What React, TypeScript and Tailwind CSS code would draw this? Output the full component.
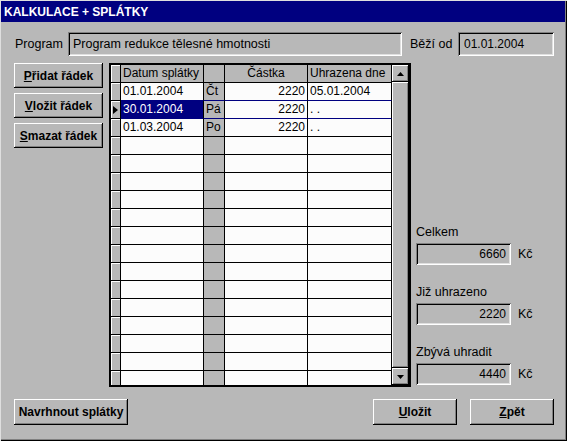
import React from 'react'

const raised = 'shadow-[inset_-1px_-1px_#000,inset_1px_1px_#fff,inset_-2px_-2px_#808080]'
const sunken = 'shadow-[inset_1px_1px_#808080,inset_-1px_-1px_#fff,inset_2px_2px_#000,inset_-2px_-2px_#dfdfdf]'

interface Row {
  date: string,
  day: string,
  amount: string,
  paid: string
}

const rows: Row[] = [
  { date: '01.01.2004', day: 'Čt', amount: '2220', paid: '05.01.2004' },
  { date: '30.01.2004', day: 'Pá', amount: '2220', paid: '. .' },
  { date: '01.03.2004', day: 'Po', amount: '2220', paid: '. .' },
  ...Array.from({ length: 14 }, () => ({ date: '', day: '', amount: '', paid: '' }))
]

const Btn: React.FC<{ children: React.ReactNode, className: string }> = ({ children, className }) => (
  <div className={`flex items-center justify-center bg-[#b8b8b8] font-bold text-[12px] text-black ${raised} ${className}`}>
    {children}
  </div>
)

const Field: React.FC<{ children: React.ReactNode, className: string }> = ({ children, className }) => (
  <div className={`flex items-center text-black ${sunken} ${className}`}>{children}</div>
)

const Arrow: React.FC<{ up?: boolean }> = ({ up }) => (
  <svg width="7" height="4" viewBox="0 0 7 4">
    {up ? <polygon points="3.5,0 7,4 0,4" fill="#000" /> : <polygon points="0,0 7,0 3.5,4" fill="#000" />}
  </svg>
)

const Grid: React.FC = () => {
  return (
    <div className="ml-[6px] w-[302px] h-[324px] border-2 border-black flex overflow-hidden text-[12px]">
      <div className="w-[281px] flex flex-col">
        {/* header */}
        <div className="flex h-[18px] shrink-0 border-b border-black bg-[#b8b8b8]">
          <div className="w-[10px] border-r border-black shadow-[inset_1px_1px_#fff]" />
          <div className="w-[83px] border-r border-black pl-[2px] leading-[17px] whitespace-nowrap overflow-hidden">Datum splátky</div>
          <div className="w-[21px] border-r border-black" />
          <div className="w-[83px] border-r border-black text-center leading-[17px]">Částka</div>
          <div className="w-[84px] border-r border-black pl-[2px] leading-[17px] whitespace-nowrap overflow-hidden">Uhrazena dne</div>
        </div>
        {rows.map((r, i) => {
          const line = i === 0 || i === 1 ? 'border-b-[#000080]' : 'border-b-black'
          const sel = i === 1
          return (
            <div key={i} className="flex h-[18px] shrink-0">
              <div className="w-[10px] border-r border-b border-black bg-[#b8b8b8] shadow-[inset_1px_1px_#fff] flex items-center pl-[2px]">
                {sel && (
                  <svg width="5" height="8" viewBox="0 0 5 8"><polygon points="0,0 5,4 0,8" fill="#000" /></svg>
                )}
              </div>
              <div className={`w-[83px] border-r border-r-black border-b ${line} pl-[2px] leading-[17px] ${sel ? 'bg-[#000080] text-white' : 'bg-[#fcfcfc]'}`}>{r.date}</div>
              <div className={`w-[21px] border-r border-r-black border-b ${line} bg-[#b8b8b8] pl-[2px] leading-[17px]`}>{r.day}</div>
              <div className={`w-[83px] border-r border-r-black border-b ${line} bg-[#fcfcfc] pr-[2px] text-right leading-[17px]`}>{r.amount}</div>
              <div className={`w-[84px] border-r border-r-black border-b ${line} bg-[#fcfcfc] pl-[2px] leading-[17px] whitespace-pre`}>{r.paid}</div>
            </div>
          )
        })}
      </div>
      {/* scrollbar */}
      <div className="w-[17px] flex flex-col bg-[#b8b8b8]">
        <div className={`h-[17px] shrink-0 flex items-center justify-center ${raised}`}><Arrow up /></div>
        <div className={`flex-1 ${raised}`} />
        <div className={`h-[17px] shrink-0 flex items-center justify-center ${raised}`}><Arrow /></div>
      </div>
    </div>
  )
}

const Total: React.FC<{ label: string, value: string, first?: boolean }> = ({ label, value, first }) => (
  <>
    <div className={`h-[14px] leading-[14px] ${first ? 'mt-[162px]' : 'mt-[20px]'}`}>{label}</div>
    <div className="flex items-center mt-[4px]">
      <Field className="w-[95px] h-[22px] justify-end pr-[5px] text-[12px]">{value}</Field>
      <span className="ml-[7px]">Kč</span>
    </div>
  </>
)

export default function App() {
  return (
    <div className="w-[567px] h-[441px] bg-[#b8b8b8] flex flex-col text-[12.5px] text-black font-['Liberation_Sans',Arial,sans-serif] shadow-[inset_1px_1px_#dfdfdf,inset_-1px_-1px_#000,inset_-2px_-2px_#808080] overflow-hidden">
      <div className="ml-[1px] mt-[1px] mr-[2px] h-[21px] bg-[#000080] text-white font-bold text-[12px] pl-[3px] flex items-center">
        KALKULACE + SPLÁTKY
      </div>

      <div className="flex items-center mt-[10px] pl-[15px] h-[24px]">
        <span className="w-[53px]">Program</span>
        <Field className="w-[334px] h-[24px] pl-[5px]">Program redukce tělesné hmotnosti</Field>
        <span className="ml-[8px] w-[48px]">Běží od</span>
        <Field className="w-[96px] h-[24px] pl-[6px] text-[12px]">01.01.2004</Field>
      </div>

      <div className="flex mt-[7px] pl-[14px]">
        <div className="w-[89px] flex flex-col gap-[5px]">
          <Btn className="h-[25px]"><span><u>P</u>řidat řádek</span></Btn>
          <Btn className="h-[25px]"><span><u>V</u>ložit řádek</span></Btn>
          <Btn className="h-[25px]"><span><u>S</u>mazat řádek</span></Btn>
        </div>
        <Grid />
        <div className="ml-[5px] flex flex-col">
          <Total first label="Celkem" value="6660" />
          <Total label="Již uhrazeno" value="2220" />
          <Total label="Zbývá uhradit" value="4440" />
        </div>
      </div>

      <div className="flex mt-[12px] pl-[14px] pr-[13px]">
        <Btn className="w-[114px] h-[26px]">Navrhnout splátky</Btn>
        <Btn className="w-[84px] h-[26px] ml-auto"><span><u>U</u>ložit</span></Btn>
        <Btn className="w-[84px] h-[26px] ml-[13px]"><span><u>Z</u>pět</span></Btn>
      </div>
    </div>
  )
}
